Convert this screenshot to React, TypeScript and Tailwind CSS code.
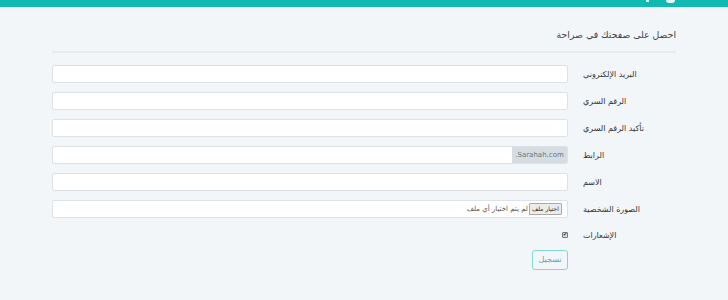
import React from "react";

const rows = [
  { label: "البريد الإلكتروني" },
  { label: "الرقم السري" },
  { label: "تأكيد الرقم السري" },
];

function Label({ text }: { text: string }) {
  return (
    <div className="w-[108px] pl-[15px] pt-[4px] text-[8px] leading-[12px] text-[#333]" dir="rtl" style={{ textAlign: "left" }}>
      {text}
    </div>
  );
}

export default function App() {
  return (
    <div className="min-h-[300px] bg-[#f3f6f9] font-['DejaVu_Sans',sans-serif]">
      <div className="relative h-[7px] bg-[#12b9b0]">
        <div className="absolute left-[646px] top-0 h-[2px] w-[3px] bg-white/80" />
        <div className="absolute left-[666px] top-0 h-[3px] w-[9px] rounded-b-[3px] bg-white/90" />
      </div>
      <div className="mx-auto w-[624px]">
        <div className="pt-[21px] text-right text-[9.3px] leading-[13px] text-[#3d4245]" dir="rtl">
          احصل على صفحتك في صراحة
        </div>
        <div className="mt-[10px] h-[2px] bg-[#e7ebee]" />
        <div className="mt-[12px] flex flex-col gap-[9px]">
          {rows.map((r) => (
            <div key={r.label} className="flex">
              <div className="h-[18px] flex-1 rounded-[2px] border border-[#dde2e6] bg-white" />
              <Label text={r.label} />
            </div>
          ))}
          <div className="flex">
            <div className="flex h-[18px] flex-1 overflow-hidden rounded-[2px] border border-[#dde2e6] bg-white">
              <div className="flex-1" />
              <div className="flex w-[55px] items-center justify-center bg-[#d6dde2] text-[7px] text-[#6b7378]" dir="rtl">
                Sarahah.com.
              </div>
            </div>
            <Label text="الرابط" />
          </div>
          <div className="flex">
            <div className="h-[18px] flex-1 rounded-[2px] border border-[#dde2e6] bg-white" />
            <Label text="الاسم" />
          </div>
          <div className="flex">
            <div className="flex h-[18px] flex-1 items-center justify-end rounded-[2px] border border-[#dde2e6] bg-white pr-[5px]" dir="ltr">
              <span className="text-[7px] text-[#555]" dir="rtl">لم يتم اختيار أي ملف</span>
              <span className="ml-[1px] rounded-[1px] border border-[#a9a9a9] bg-[#ececec] px-[2px] text-[6px] leading-[10px] text-[#222]" dir="rtl">
                اختيار ملف
              </span>
            </div>
            <Label text="الصورة الشخصية" />
          </div>
          <div className="flex h-[14px]">
            <div className="flex flex-1 items-center justify-end pt-[1px]">
              <div className="flex h-[6px] w-[6px] items-center justify-center rounded-[1px] border border-[#777] bg-[#ddd] text-[5px] leading-none text-[#222]">
                ✔
              </div>
            </div>
            <div className="w-[108px] pl-[15px] pt-[3px] text-[8px] leading-[12px] text-[#333]" dir="rtl" style={{ textAlign: "left" }}>
              الإشعارات
            </div>
          </div>
          <div className="flex">
            <div className="flex flex-1 justify-end">
              <button className="h-[20px] w-[36px] rounded-[3px] border border-[#7fd9d1] bg-transparent text-[8px] text-[#5aa5a0]" dir="rtl">
                تسجيل
              </button>
            </div>
            <div className="w-[108px]" />
          </div>
        </div>
      </div>
    </div>
  );
}
